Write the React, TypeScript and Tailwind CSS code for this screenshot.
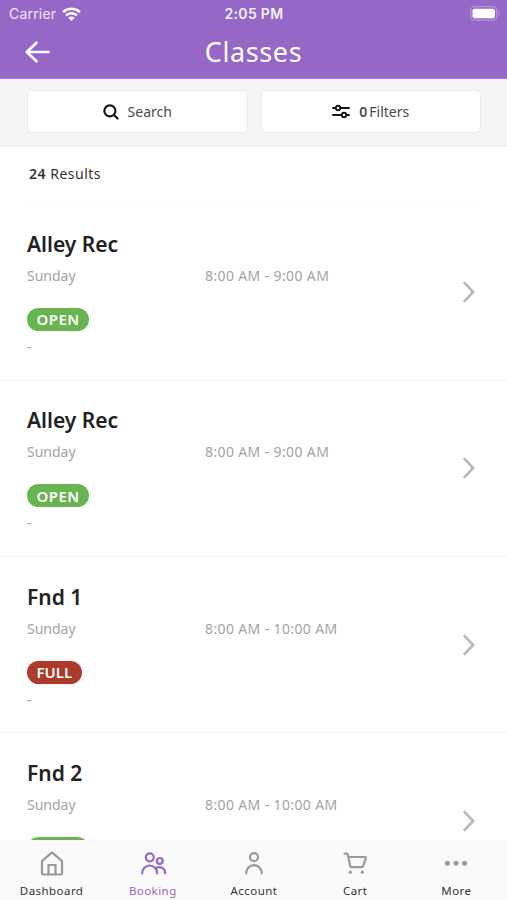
import type { ReactNode } from "react";
import clsx from "clsx";

type Session = {
  title: string;
  day: string;
  time: string;
  status: "OPEN" | "FULL";
};

const sessions: Session[] = [
  { title: "Alley Rec", day: "Sunday", time: "8:00 AM - 9:00 AM", status: "OPEN" },
  { title: "Alley Rec", day: "Sunday", time: "8:00 AM - 9:00 AM", status: "OPEN" },
  { title: "Fnd 1", day: "Sunday", time: "8:00 AM - 10:00 AM", status: "FULL" },
  { title: "Fnd 2", day: "Sunday", time: "8:00 AM - 10:00 AM", status: "OPEN" },
];

const tabs: { label: string; icon: ReactNode; active?: boolean }[] = [
  {
    label: "Dashboard",
    icon: (
      <>
        <path d="M4 12.2 14 3.4l10 8.800v12a1.300 1.300 0 0 1-1.300 1.300H5.300A1.300 1.300 0 0 1 4 24.200Z" />
        <path d="M10.500 25.300v-9.300h7v9.300" />
      </>
    ),
  },
  {
    label: "Booking",
    active: true,
    icon: (
      <>
        <circle cx="10.800" cy="8.300" r="4" />
        <circle cx="20.800" cy="11.900" r="2.900" />
        <path d="M3.200 24.500c0-4.600 3.200-8 7.500-8s7.500 3.400 7.500 8" />
        <path d="M17 19.200c4.400-2.700 9.200.2 9.200 5.100" />
      </>
    ),
  },
  {
    label: "Account",
    icon: (
      <>
        <circle cx="14" cy="8.200" r="4" />
        <path d="M6.300 24.300c0-4.700 3.300-8.100 7.700-8.100s7.700 3.400 7.700 8.100" />
      </>
    ),
  },
  {
    label: "Cart",
    icon: (
      <>
        <path d="M3.500 4.600h2.200a1 1 0 0 1 1 .8L9.200 17a1.500 1.500 0 0 0 1.500 1.200h10a1.500 1.500 0 0 0 1.400-1L24.900 9a.8.8 0 0 0-.8-1H7.300" />
        <circle cx="9.300" cy="23.300" r="1.200" fill="currentColor" strokeWidth="1" />
        <circle cx="21.300" cy="23.300" r="1.200" fill="currentColor" strokeWidth="1" />
      </>
    ),
  },
  {
    label: "More",
    icon: (
      <g fill="currentColor" stroke="none">
        <circle cx="5.400" cy="14.300" r="2.500" />
        <circle cx="14" cy="14.300" r="2.500" />
        <circle cx="22.600" cy="14.300" r="2.500" />
      </g>
    ),
  },
];

function StatusBar() {
  return (
    <div className="grid h-[27px] grid-cols-3 items-center pr-[8px] pl-[9px] font-['Inter',sans-serif] text-[14px]">
      <div className="flex items-center gap-[6px] text-white/85">
        <span className="tracking-[0.2px]">Carrier</span>
        <svg width="19" height="14" viewBox="0 0 19 14" fill="none" stroke="white" strokeWidth="2.500">
          <path d="M1 5.100a12.300 12.300 0 0 1 17 0" />
          <path d="M4 8.400a8 8 0 0 1 11 0" />
          <path d="M6.300 10.800a4.600 4.600 0 0 1 6.400 0L9.500 14Z" fill="white" stroke="none" />
        </svg>
      </div>
      <span className="text-center font-semibold tracking-[0.300px] whitespace-nowrap text-white/90">2:05 PM</span>
      <svg className="-mr-[2px] justify-self-end" width="31" height="15" viewBox="0 0 31 15">
        <rect x="0.700" y="0.700" width="26" height="13.500" rx="3.800" fill="none" stroke="#b794dc" strokeWidth="1.300" />
        <rect x="2.500" y="2.700" width="22.400" height="9.500" rx="2" fill="white" />
        <path d="M28.200 5.200v4.500c1.700-.6 1.700-3.900 0-4.500Z" fill="#b794dc" />
      </svg>
    </div>
  );
}

function Header() {
  return (
    <header className="h-[79px] shrink-0 border-b border-[#a57dd2] bg-[#9567c7] text-white">
      <StatusBar />
      <div className="grid h-[49px] grid-cols-[1fr_auto_1fr] items-center px-6">
        <svg width="28" height="24" viewBox="0 0 28 24" fill="none" stroke="white" strokeWidth="2.700" strokeLinecap="round" strokeLinejoin="round">
          <path d="M12.500 2.700 2.800 12l9.700 9.300M3.200 12h21.300" />
        </svg>
        <h1 className="text-[27px] leading-none tracking-[0.600px]">Classes</h1>
      </div>
    </header>
  );
}

function Toolbar() {
  return (
    <div className="grid h-[67px] shrink-0 grid-cols-2 gap-[13px] border-b border-[#ebebed] bg-[#f5f5f8] pr-[26px] pl-[27px] pt-[11px] text-[14px] text-[#4a4a4a]">
      <button className="flex h-[43px] items-center justify-center gap-[9px] rounded-[5px] border border-[#e9e9ec] bg-white">
        <svg width="16" height="16" viewBox="0 0 17 17" fill="none" stroke="#161616" strokeWidth="2.300" strokeLinecap="round">
          <circle cx="7.300" cy="7.300" r="5.900" />
          <path d="m11.800 11.800 3.700 3.700" />
        </svg>
        <span>Search</span>
      </button>
      <button className="flex h-[43px] items-center justify-center gap-[9px] rounded-[5px] border border-[#e9e9ec] bg-white">
        <svg width="18" height="15" viewBox="0 0 18 15" fill="none" stroke="#161616" strokeWidth="1.900" strokeLinecap="round">
          <path d="M1 4h2.600M8.300 4H17M1 11h8.600M14.300 11H17" />
          <circle cx="6" cy="4" r="2.200" />
          <circle cx="12" cy="11" r="2.200" />
        </svg>
        <span>
          <span className="mr-[2px] font-semibold">0</span>Filters
        </span>
      </button>
    </div>
  );
}

function SessionRow({ title, day, time, status }: Session) {
  return (
    <li className="flex h-[176.300px] shrink-0 items-center justify-between border-b border-[#f4f4f4] pr-[32px] pl-[27px]">
      <div className="h-full pt-[24.500px]">
        <h2 className="text-[21px] leading-[30px] font-semibold text-[#222]">{title}</h2>
        <div className="mt-[7px] flex text-[14px] leading-5 text-[#a3a3a3]">
          <span className="w-[178px]">{day}</span>
          <span className="tracking-[0.370px]">{time}</span>
        </div>
        <span
          className={clsx(
            "mt-[22px] flex h-[23px] w-fit items-center rounded-full px-[9.500px] text-[15px] font-semibold text-white",
            status === "OPEN" ? "bg-[#67b451] tracking-[0.450px]" : "bg-[#ad3a2a]"
          )}
        >
          {status}
        </span>
        <p className="mt-[6px] text-[14px] leading-5 text-[#a3a3a3]">-</p>
      </div>
      <svg width="12" height="22" viewBox="0 0 12 22" fill="none" stroke="#b9b9b9" strokeWidth="2.600" strokeLinecap="round">
        <path d="m1.600 2 8.600 9-8.600 9" />
      </svg>
    </li>
  );
}

function TabBar() {
  return (
    <nav className="grid h-[60px] shrink-0 grid-cols-5 bg-[#fafafa] pl-px">
      {tabs.map((tab) => (
        <a
          key={tab.label}
          className={clsx("flex flex-col items-center pt-[9px]", tab.active ? "text-[#9567c7]" : "text-[#333]")}
        >
          <svg
            className={tab.active ? "text-[#9567c7]" : "text-[#999]"}
            width="28"
            height="28"
            viewBox="0 0 28 28"
            fill="none"
            stroke="currentColor"
            strokeWidth="2.200"
            strokeLinecap="round"
            strokeLinejoin="round"
          >
            {tab.icon}
          </svg>
          <span className="mt-[6px] text-[11.500px] leading-4 tracking-[0.450px]">{tab.label}</span>
        </a>
      ))}
    </nav>
  );
}

export default function App() {
  return (
    <div className="flex h-[900px] w-full flex-col overflow-hidden bg-white font-['Noto_Sans',sans-serif]">
      <Header />
      <Toolbar />
      <main className="min-h-0 flex-1 overflow-hidden">
        <p className="mx-[27px] h-[58.500px] border-b border-[#fcfcfc] pt-[18px] pl-[2px] text-[14px] leading-5 tracking-[0.500px] text-[#333]">
          <span className="font-semibold">24</span> Results
        </p>
        <ul>
          {sessions.map((session, i) => (
            <SessionRow key={i} {...session} />
          ))}
        </ul>
      </main>
      <TabBar />
    </div>
  );
}
